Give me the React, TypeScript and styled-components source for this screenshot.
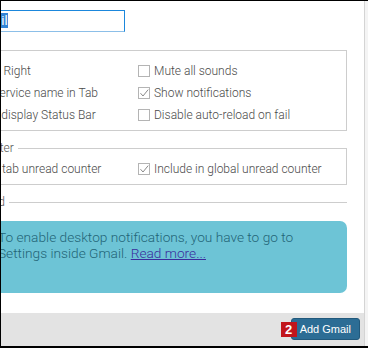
import { Fragment } from "react";
import styled, { createGlobalStyle } from "styled-components";

const leftOptions = ["Align to Right", "Show service name in Tab", "Always display Status Bar"];
const rightOptions = [
  { label: "Mute all sounds", checked: false },
  { label: "Show notifications", checked: true },
  { label: "Disable auto-reload on fail", checked: false },
];

function Check({ checked }: { checked: boolean }) {
  return (
    <CheckSvg width="12" height="12" viewBox="0 0 12 12">
      <rect x="0.5" y="0.5" width="11" height="11" fill="#fff" stroke="#b4b4b4" />
      {checked && <path d="M2.5 6.2 L5 9 L10.2 2.6" fill="none" stroke="#8a8a8a" strokeWidth="1" />}
    </CheckSvg>
  );
}

function Option({ label, checked }: { label: string; checked: boolean }) {
  return (
    <OptionRow>
      <Check checked={checked} />
      <OptionLabel>{label}</OptionLabel>
    </OptionRow>
  );
}

export default function App() {
  return (
    <>
      <GlobalStyle />
      <Page>
        <Dialog>
          <Body>
            <Content>
              <FieldRow>
                <FieldLabel>Name</FieldLabel>
                <Field>
                  Gma<Selected>il</Selected>
                </Field>
              </FieldRow>

              <Box $top={11}>
                <Legend>Options</Legend>
                <OptionGrid>
                  {leftOptions.map((l, i) => (
                    <Fragment key={l}>
                      <Option label={l} checked={i === 1} />
                      <Option {...rightOptions[i]} />
                    </Fragment>
                  ))}
                </OptionGrid>
              </Box>

              <Box $top={10}>
                <Legend>Unread counter</Legend>
                <OptionGrid>
                  <Option label="Display tab unread counter" checked />
                  <Option label="Include in global unread counter" checked />
                </OptionGrid>
              </Box>

              <Box $top={10} $collapsed>
                <Legend>
                  <Toggle>+</Toggle>
                  Advanced
                </Legend>
              </Box>

              <Alert>
                To enable desktop notifications, you have to go to Settings inside Gmail.{" "}
                <AlertLink href="#">Read more...</AlertLink>
              </Alert>
            </Content>
          </Body>
          <Footer>
            <AddButton>
              <Badge>2</Badge>
              Add Gmail
            </AddButton>
          </Footer>
        </Dialog>
      </Page>
    </>
  );
}

const GlobalStyle = createGlobalStyle`
  html, body { margin: 0; padding: 0; background: #fff; }
  body { font-family: Roboto, "Liberation Sans", sans-serif; }
`;

const Page = styled.div`
  width: 368px;
  height: 348px;
  box-sizing: border-box;
  border-top: 1px solid #000;
  border-bottom: 2px solid #000;
  border-left: 1px solid #000;
  display: flex;
  overflow: hidden;
  background: #f4f4f4;
`;

const Dialog = styled.div`
  width: 363px;
  flex-shrink: 0;
  border-right: 1px solid #d4d4d4;
  background: #fff;
  display: flex;
  flex-direction: column;
`;

const Body = styled.div`
  flex: 1;
  overflow: hidden;
  padding: 9px 17px 0 0;
`;

const Content = styled.div`
  margin-left: -66px;
  display: flex;
  flex-direction: column;
`;

const FieldRow = styled.div`
  display: flex;
  align-items: center;
  height: 22px;
`;

const FieldLabel = styled.span`
  width: 35px;
  font-size: 12px;
  color: #555;
`;

const Field = styled.div`
  width: 155px;
  height: 22px;
  box-sizing: border-box;
  border: 1px solid #1b87dc;
  border-bottom-color: #8cbfe8;
  padding: 0 3px;
  font-size: 13px;
  line-height: 20px;
  color: #333;
`;

const Selected = styled.span`
  display: inline-block;
  line-height: 15px;
  background: #3384d6;
  color: #fff;
`;

const Box = styled.fieldset<{ $top: number; $collapsed?: boolean }>`
  margin: ${(p) => p.$top}px 0 0;
  padding: ${(p) => (p.$collapsed ? "0 9px" : "3px 9px 4px")};
  border: 1px solid #cdcdcd;
  border-width: ${(p) => (p.$collapsed ? "1px 0 0" : "1px")};
  min-width: 0;
`;

const Legend = styled.legend`
  display: flex;
  align-items: center;
  margin-left: -15px;
  padding: 0 4px 0 3px;
  font-size: 12px;
  font-weight: 300;
  line-height: 14px;
  color: #555;
`;

const Toggle = styled.span`
  width: 11px;
  height: 11px;
  margin-right: 8px;
  border: 1px solid #aaa;
  font-size: 10px;
  line-height: 10px;
  text-align: center;
`;

const OptionGrid = styled.div`
  display: grid;
  grid-template-columns: 193px 1fr;
`;

const OptionRow = styled.label`
  display: flex;
  align-items: center;
  gap: 4px;
  height: 22px;
  white-space: nowrap;
`;

const CheckSvg = styled.svg`
  flex-shrink: 0;
  display: block;
`;

const OptionLabel = styled.span`
  font-size: 12px;
  font-weight: 300;
  color: #4a4a4a;
`;

const Alert = styled.div`
  margin-top: 12px;
  height: 72px;
  box-sizing: border-box;
  padding: 8px 14px 0 63px;
  border-radius: 7px;
  background: #6dc4d6;
  color: #236476;
  font-size: 13.7px;
  font-weight: 300;
  line-height: 16px;
`;

const AlertLink = styled.a`
  color: #3a2d9c;
  text-decoration: underline;
`;

const Footer = styled.div`
  height: 33px;
  flex-shrink: 0;
  box-sizing: border-box;
  background: #e3e3e3;
  display: flex;
  justify-content: flex-end;
  align-items: flex-start;
  padding: 5px 4px 0 0;
`;

const AddButton = styled.button`
  position: relative;
  height: 22px;
  padding: 0 8px;
  background: #2c6d95;
  border: 1px solid #21597c;
  border-radius: 3px;
  color: #fff;
  font-family: "Liberation Sans", Arial, sans-serif;
  font-size: 11px;
`;

const Badge = styled.span`
  position: absolute;
  left: -11px;
  top: 3px;
  width: 16px;
  height: 15px;
  background: #c2161c;
  color: #fff;
  font-family: "Liberation Sans", Arial, sans-serif;
  font-weight: bold;
  font-size: 13px;
  line-height: 15px;
  text-align: center;
`;
